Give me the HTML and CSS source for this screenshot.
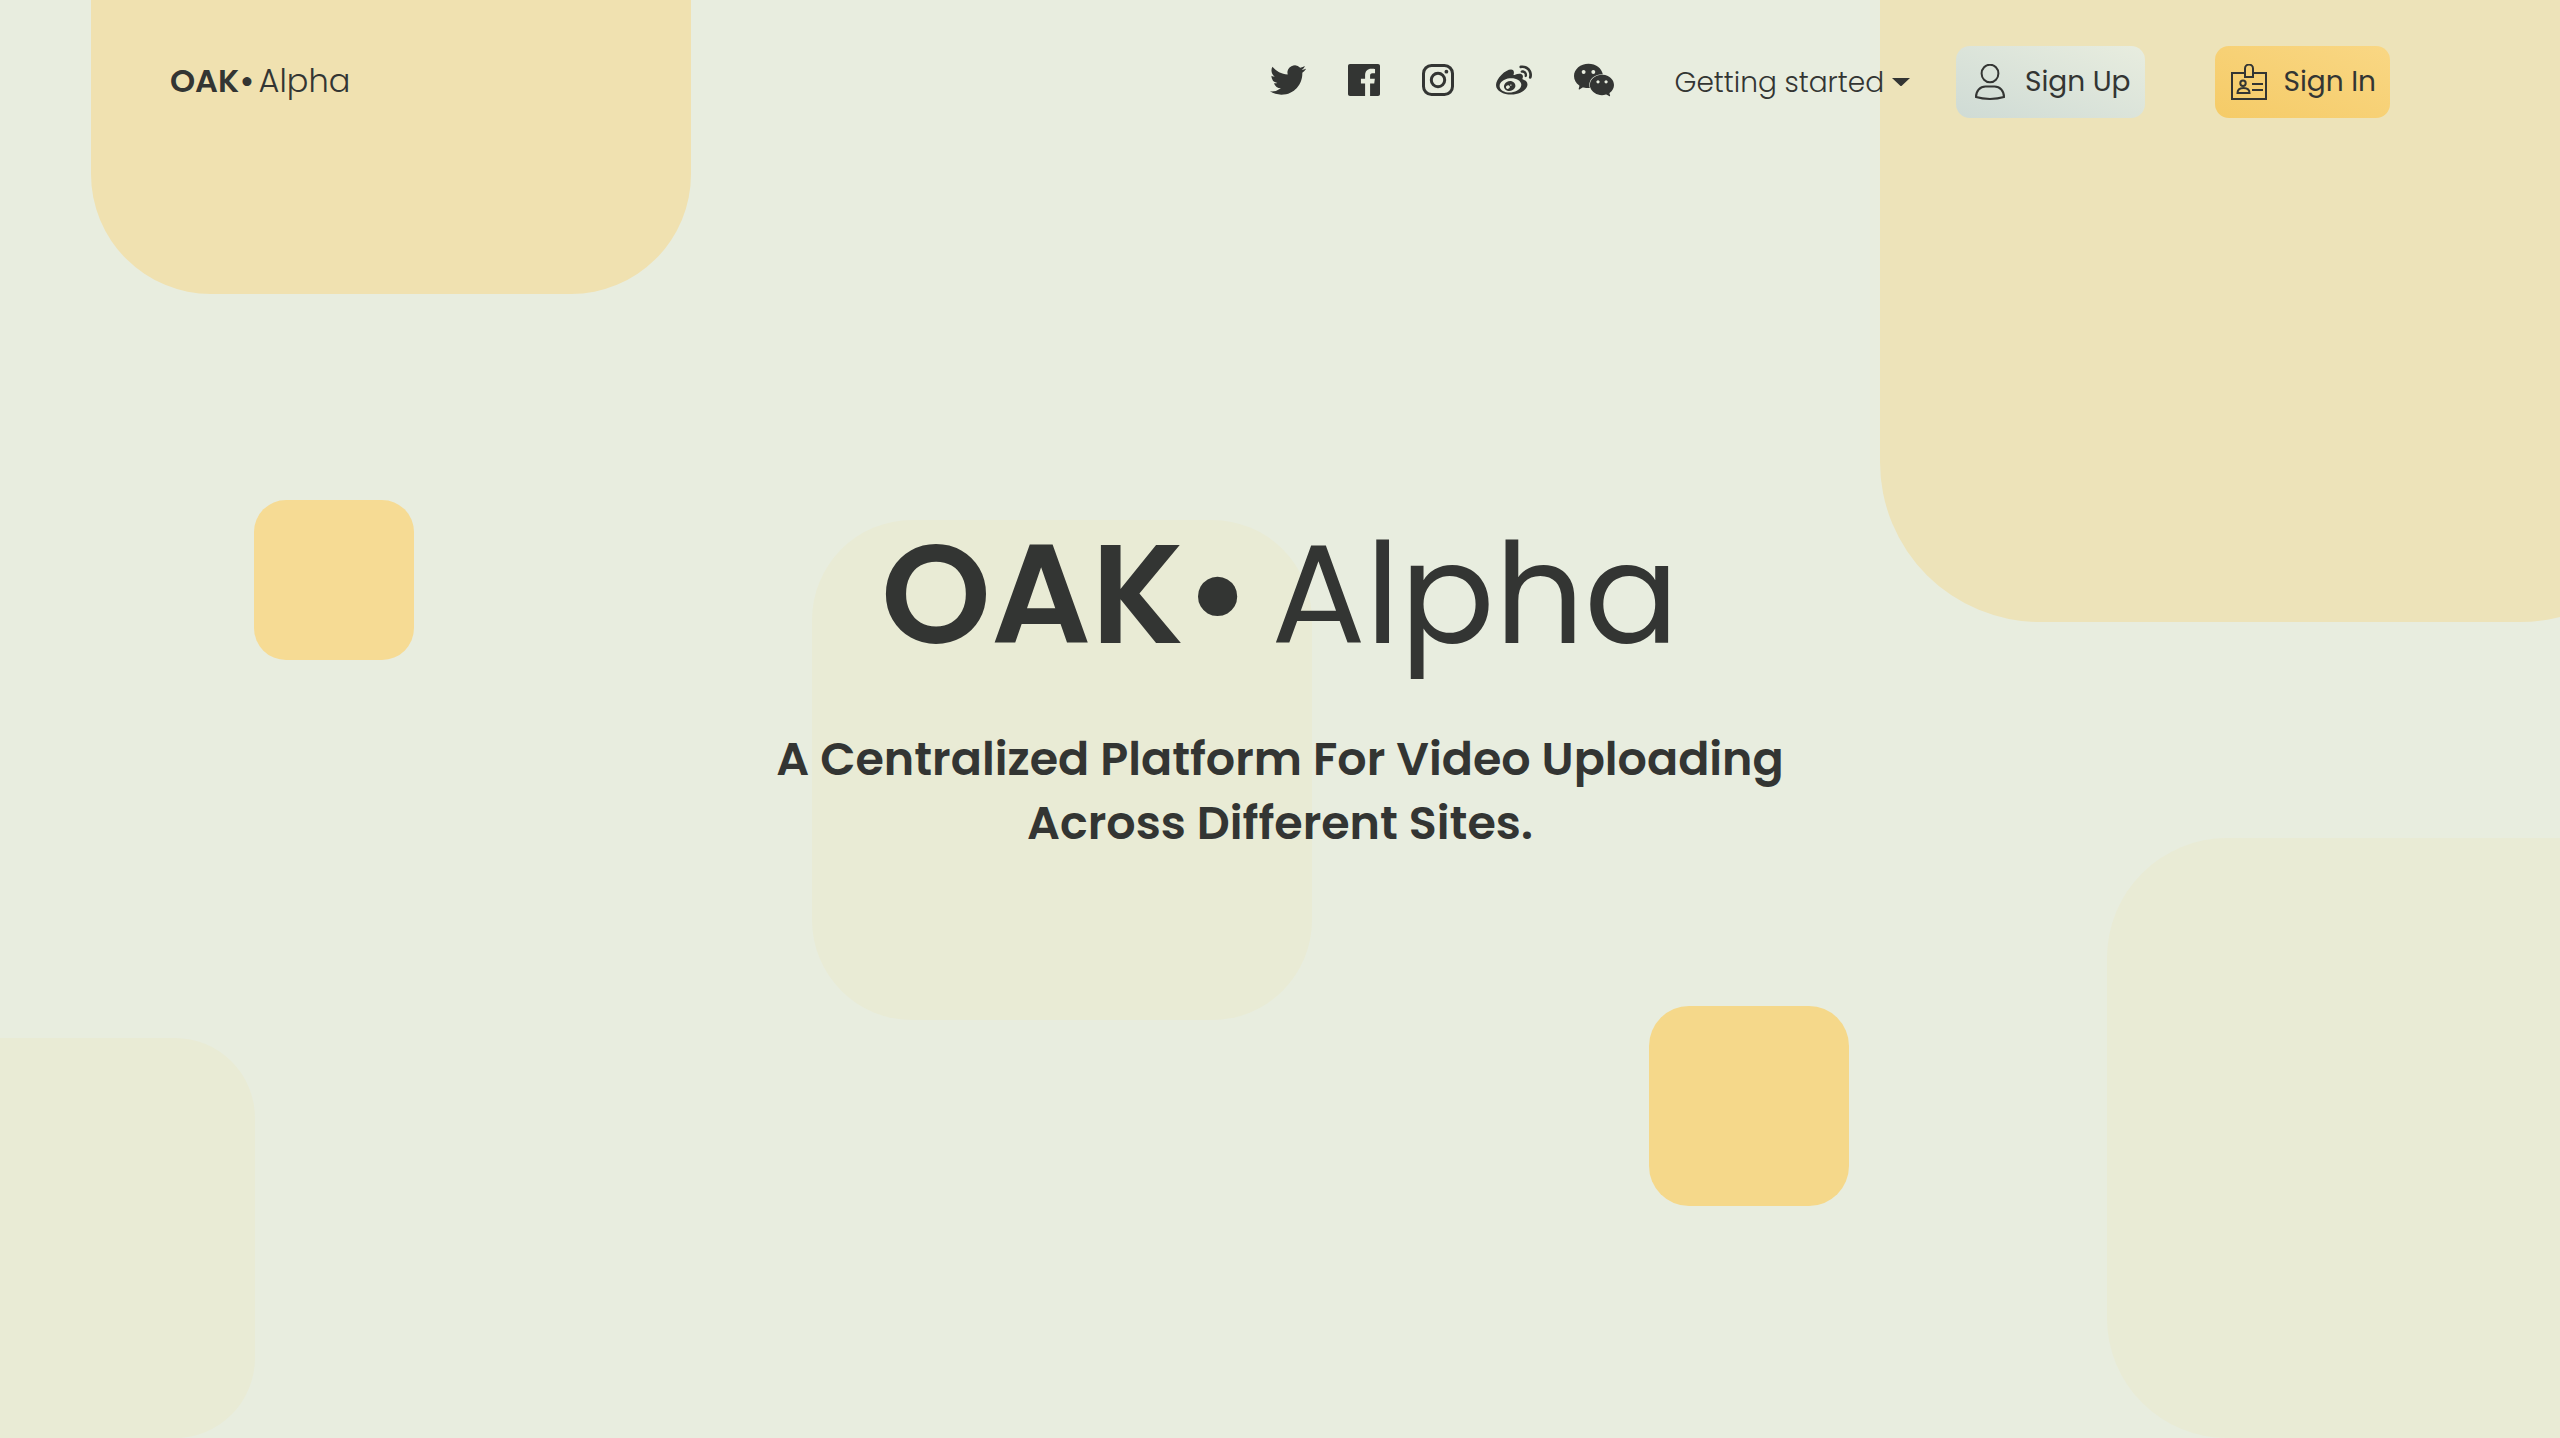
FILE: index.html
```html
<!DOCTYPE html>
<html lang="en">
<head>
<meta charset="utf-8">
<meta name="viewport" content="width=device-width, initial-scale=1">
<title>OAK• Alpha</title>
<link rel="stylesheet" href="styles.css">
</head>
<body>
<div class="shapes" aria-hidden="true">
  <span class="shape shape-top-left"></span>
  <span class="shape shape-top-right"></span>
  <span class="shape shape-small-left"></span>
  <span class="shape shape-center"></span>
  <span class="shape shape-bottom-left"></span>
  <span class="shape shape-small-right"></span>
  <span class="shape shape-bottom-right"></span>
</div>
<header class="header">
  <a class="logo" href="#"><b>OAK•</b> <span>Alpha</span></a>
  <nav class="nav">
    <div class="social">
      <a href="#" aria-label="Twitter"><svg width="36" height="36" viewBox="0 0 24 24"><path d="M23.953 4.57a10 10 0 01-2.825.775 4.958 4.958 0 002.163-2.723c-.951.555-2.005.959-3.127 1.184a4.92 4.92 0 00-8.384 4.482C7.69 8.095 4.067 6.13 1.64 3.162a4.822 4.822 0 00-.666 2.475c0 1.71.87 3.213 2.188 4.096a4.904 4.904 0 01-2.228-.616v.06a4.923 4.923 0 003.946 4.827 4.996 4.996 0 01-2.212.085 4.936 4.936 0 004.604 3.417 9.867 9.867 0 01-6.102 2.105c-.39 0-.779-.023-1.17-.067a13.995 13.995 0 007.557 2.209c9.053 0 13.998-7.496 13.998-13.985 0-.21 0-.42-.015-.63A9.935 9.935 0 0024 4.59z"/></svg></a>
      <a href="#" aria-label="Facebook"><svg width="32" height="32" viewBox="0 0 24 24"><path d="M22.500 0H1.500C.6 0 0 .6 0 1.500v21C0 23.400.6 24 1.500 24h11.318v-9.294H9.689v-3.621h3.129V8.41c0-3.099 1.894-4.785 4.659-4.785 1.325 0 2.464.097 2.796.141v3.24h-1.921c-1.5 0-1.792.721-1.792 1.771v2.311h3.584l-.465 3.63H16.56V24h5.940c.9 0 1.500-.6 1.500-1.500v-21C24 .6 23.400 0 22.500 0"/></svg></a>
      <a href="#" aria-label="Instagram"><svg width="32" height="32" viewBox="0 0 32 32"><rect x="1.500" y="1.500" width="29" height="29" rx="8" fill="none" stroke="currentColor" stroke-width="3"/><circle cx="16" cy="16" r="6.700" fill="none" stroke="currentColor" stroke-width="3"/><circle cx="24.400" cy="7.700" r="1.900"/></svg></a>
      <a href="#" aria-label="Weibo"><svg width="36" height="36" viewBox="0 0 24 24"><path d="M10.098 20.323c-3.977.391-7.414-1.406-7.672-4.02-.259-2.609 2.759-5.047 6.74-5.441 3.979-.394 7.413 1.404 7.671 4.018.259 2.6-2.759 5.049-6.737 5.439l-.002.004zM9.05 17.219c-.384.616-1.208.884-1.829.602-.612-.279-.793-.991-.406-1.593.379-.595 1.176-.861 1.793-.601.622.263.82.972.442 1.592zm1.27-1.627c-.141.237-.449.353-.689.253-.236-.09-.313-.361-.177-.586.138-.227.436-.346.672-.24.239.09.315.36.18.601l.014-.028zm.176-2.719c-1.893-.493-4.033.45-4.857 2.118-.836 1.704-.026 3.591 1.886 4.21 1.983.64 4.318-.341 5.132-2.179.8-1.793-.201-3.642-2.161-4.149zm7.563-1.224c-.346-.105-.57-.18-.405-.615.375-.977.42-1.804 0-2.404-.781-1.112-2.915-1.053-5.364-.03 0 0-.766.331-.571-.271.376-1.217.315-2.224-.27-2.809-1.338-1.337-4.869.045-7.888 3.08C1.309 10.87 0 13.273 0 15.348c0 3.981 5.099 6.395 10.086 6.395 6.536 0 10.888-3.801 10.888-6.82 0-1.822-1.547-2.854-2.915-3.284v.01zm1.908-5.092c-.766-.856-1.908-1.187-2.96-.962-.436.09-.706.511-.616.932.09.42.511.691.932.602.511-.105 1.067.044 1.442.465.376.421.466.977.316 1.473-.136.406.089.856.51.992.405.119.857-.105.992-.512.33-1.021.12-2.178-.646-3.035l.03.045zm2.418-2.195c-1.576-1.757-3.905-2.419-6.054-1.968-.496.104-.812.587-.706 1.081.104.496.586.813 1.082.707 1.532-.331 3.185.15 4.296 1.383 1.112 1.246 1.429 2.943.947 4.416-.165.48.106 1.007.586 1.157.479.165.991-.104 1.157-.586.675-2.088.241-4.478-1.338-6.235l.03.045z"/></svg></a>
      <a href="#" aria-label="WeChat"><svg width="40" height="40" viewBox="0 0 24 24"><path d="M8.691 2.188C3.891 2.188 0 5.476 0 9.53c0 2.212 1.17 4.203 3.002 5.55a.59.59 0 0 1 .213.665l-.39 1.48c-.019.07-.048.141-.048.213 0 .163.13.295.29.295a.326.326 0 0 0 .167-.054l1.903-1.114a.864.864 0 0 1 .717-.098 10.16 10.16 0 0 0 2.837.403c.276 0 .543-.027.811-.05-.857-2.578.157-4.972 1.932-6.446 1.703-1.415 3.882-1.98 5.853-1.838-.576-3.583-4.196-6.348-8.596-6.348zM5.785 5.991c.642 0 1.162.529 1.162 1.18a1.17 1.17 0 0 1-1.162 1.178A1.17 1.17 0 0 1 4.623 7.17c0-.651.52-1.18 1.162-1.18zm5.813 0c.642 0 1.162.529 1.162 1.18a1.17 1.17 0 0 1-1.162 1.178 1.17 1.17 0 0 1-1.162-1.178c0-.651.52-1.18 1.162-1.18zm5.34 2.867c-1.797-.052-3.746.512-5.28 1.786-1.72 1.428-2.687 3.72-1.78 6.22.942 2.453 3.666 4.229 6.884 4.229.826 0 1.622-.12 2.361-.336a.722.722 0 0 1 .598.082l1.584.926a.272.272 0 0 0 .14.047c.134 0 .24-.111.24-.247 0-.06-.023-.12-.038-.177l-.327-1.233a.582.582 0 0 1-.023-.156.49.49 0 0 1 .201-.398C23.024 18.48 24 16.82 24 14.98c0-3.21-2.931-5.837-6.656-6.088V8.89c-.135-.01-.27-.027-.407-.03zm-2.53 3.274c.535 0 .969.44.969.982a.976.976 0 0 1-.969.983.976.976 0 0 1-.969-.983c0-.542.434-.982.97-.982zm4.844 0c.535 0 .969.44.969.982a.976.976 0 0 1-.969.983.976.976 0 0 1-.969-.983c0-.542.434-.982.969-.982z"/></svg></a>
    </div>
    <button class="menu" type="button">Getting started<svg width="18" height="10" viewBox="0 0 18 10"><path d="M0 0h18L10 7.500Q9 8.500 8 7.500z"/></svg></button>
    <div class="actions">
      <button class="btn btn-up" type="button"><svg width="36" height="36" viewBox="0 0 36 36" fill="none" stroke="currentColor" stroke-width="2"><ellipse cx="18" cy="9.500" rx="8.400" ry="8.800"/><path d="M13.500 22.500h9c5.500 0 9.500 4.500 9.500 10.500-8 2.500-20 2.500-28 0 0-6 4-10.500 9.500-10.500z"/></svg>Sign Up</button>
      <button class="btn btn-in" type="button"><svg width="36" height="36" viewBox="0 0 36 36" fill="none" stroke="currentColor" stroke-width="2"><path d="M14 9H1v26h34V9H22"/><path d="M14 13V4.500a4 4 0 0 1 8 0V13z"/><circle cx="12" cy="19.200" r="2.700"/><path d="M6.500 29q0-5 6-5t6 5z"/><path d="M21 20h11M21 26h11"/></svg>Sign In</button>
    </div>
  </nav>
</header>
<main class="hero">
  <h1 class="title"><b>OAK•</b> <span>Alpha</span></h1>
  <p class="tagline">A Centralized Platform For Video Uploading<br>Across Different Sites.</p>
</main>
</body>
</html>
```
FILE: styles.css
```css
* {
  box-sizing: border-box;
}

body {
  position: relative;
  display: flex;
  flex-direction: column;
  min-height: 100vh;
  margin: 0;
  overflow: hidden;
  background: #e8eddf;
  color: #333533;
  font-family: Poppins, Inter, "Open Sans", sans-serif;
}

a {
  color: inherit;
  text-decoration: none;
}

button {
  border: 0;
  background: none;
  color: inherit;
  font: inherit;
  cursor: pointer;
}

svg {
  display: block;
  flex: none;
}

.social svg,
.menu svg {
  fill: currentColor;
}

/* Decorative rounded squares behind the page */
.shapes {
  position: absolute;
  inset: 0;
  z-index: -1;
  overflow: hidden;
}

.shape {
  position: absolute;
  border-radius: 20%;
  background: #e9ebd5;
}

.shape-top-left {
  top: -306px;
  left: 91px;
  width: 600px;
  height: 600px;
  background: #f0e1b0;
}

.shape-top-right {
  top: -178px;
  right: -120px;
  width: 800px;
  height: 800px;
  background: #ede3b9;
}

.shape-small-left {
  top: 500px;
  left: 254px;
  width: 160px;
  height: 160px;
  background: #f6db94;
}

.shape-center {
  top: 520px;
  left: 812px;
  width: 500px;
  height: 500px;
}

.shape-bottom-left {
  bottom: 0;
  left: -145px;
  width: 400px;
  height: 400px;
}

.shape-small-right {
  right: 711px;
  bottom: 232px;
  width: 200px;
  height: 200px;
  background: #f5d88a;
}

.shape-bottom-right {
  right: -147px;
  bottom: 0;
  width: 600px;
  height: 600px;
}

.header {
  display: flex;
  align-items: center;
  justify-content: space-between;
  padding: 46px 170px 0;
}

.logo {
  display: flex;
  gap: 4px;
  padding-bottom: 2px;
  font-size: 32px;
  font-weight: 300;
  line-height: 46px;
}

.logo b,
.title b {
  font-weight: 600;
}

.nav,
.social,
.menu,
.actions,
.btn {
  display: flex;
  align-items: center;
}

.social {
  gap: 42px;
  padding-bottom: 4px;
}

.menu {
  gap: 8px;
  margin: 0 46px 0 61px;
  padding: 2px 0 0;
  font-size: 28px;
  font-weight: 300;
  line-height: 42px;
}

.actions {
  gap: 70px;
}

.btn {
  gap: 17px;
  height: 72px;
  padding: 0 14px 0 16px;
  border-radius: 14px;
  font-size: 28px;
  line-height: 42px;
}

.btn-up {
  background: linear-gradient(to top right, #cfdbd5, #e8eddf);
}

.btn-in {
  background: linear-gradient(to top right, #f5cb67, #f9d784);
}

.hero {
  padding-top: 371px;
  text-align: center;
}

.title {
  display: flex;
  justify-content: center;
  gap: 20px;
  margin: 0;
  font-size: 140px;
  font-weight: 400;
  line-height: 210px;
}

.tagline {
  margin: 28px 0 0;
  font-size: 46px;
  font-weight: 600;
  line-height: 64px;
}
```
